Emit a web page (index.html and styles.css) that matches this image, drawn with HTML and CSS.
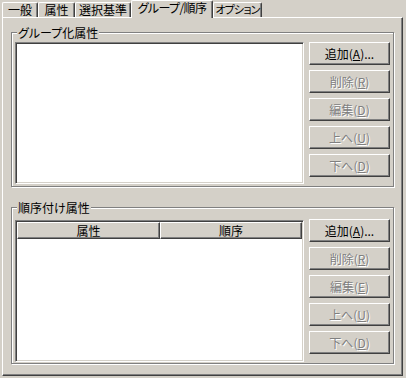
FILE: index.html
```html
<!DOCTYPE html>
<html lang="ja">
<head>
  <meta charset="UTF-8">
  <meta name="viewport" content="width=device-width, initial-scale=1.0">
  <title>グループ/順序</title>
  <link rel="stylesheet" href="styles.css">
</head>
<body>

<div class="sheet">
  <div class="tabs">
    <div class="tab tab-general">一般</div>
    <div class="tab tab-attr">属性</div>
    <div class="tab tab-select">選択基準</div>
    <div class="tab tab-group active">グループ/順序</div>
    <div class="tab tab-option">オプション</div>
  </div>

  <div class="panel">
    <!-- グループ化属性 -->
    <div class="group group-grouping">
      <div class="legend">グループ化属性</div>
      <div class="group-body">
        <div class="listbox"></div>
        <div class="buttons">
          <button class="btn">追加(<u>A</u>)...</button>
          <button class="btn" disabled>削除(<u>R</u>)</button>
          <button class="btn" disabled>編集(<u>D</u>)</button>
          <button class="btn" disabled>上へ(<u>U</u>)</button>
          <button class="btn" disabled>下へ(<u>D</u>)</button>
        </div>
      </div>
    </div>

    <!-- 順序付け属性 -->
    <div class="group group-order">
      <div class="legend">順序付け属性</div>
      <div class="group-body">
        <div class="listbox">
          <div class="list-header">
            <div class="col col-attr">属性</div>
            <div class="col col-order">順序</div>
          </div>
        </div>
        <div class="buttons">
          <button class="btn">追加(<u>A</u>)...</button>
          <button class="btn" disabled>削除(<u>R</u>)</button>
          <button class="btn" disabled>編集(<u>E</u>)</button>
          <button class="btn" disabled>上へ(<u>U</u>)</button>
          <button class="btn" disabled>下へ(<u>D</u>)</button>
        </div>
      </div>
    </div>
  </div>
</div>

</body>
</html>
```

FILE: styles.css
```css
* {
  margin: 0;
  padding: 0;
  box-sizing: border-box;
}
body {
  font-family: "Noto Sans CJK JP", sans-serif;
  font-size: 12px;
  background-color: #d4d0c8;
  color: #000;
  overflow: hidden;
}
.sheet {
  padding-left: 2px;
}

/* タブ */
.tabs {
  display: flex;
  align-items: flex-end;
  height: 17px;
}
.tab {
  display: flex;
  justify-content: center;
  height: 15px;
  line-height: 13px;
  white-space: nowrap;
  background: #d4d0c8;
  border: 1px solid #fff;
  border-bottom: none;
  border-right-color: #404040;
  border-radius: 2px 2px 0 0;
  box-shadow: inset -1px 0 #808080;
  font-feature-settings: "palt";
}
.tab-general { width: 36px; }
.tab-attr { width: 37px; }
.tab-select { width: 56px; }
.tab-group { width: 82px; letter-spacing: -0.6px; }
.tab-option { width: 49px; font-size: 11px; letter-spacing: -0.8px; }
.tab.active {
  height: 18px;
  margin-bottom: -1px;
  position: relative;
  z-index: 1;
}

/* タブの中身 */
.panel {
  width: 401px;
  height: 359px;
  padding: 14px 8px 0;
  border: 1px solid;
  border-color: #fff #404040 #404040 #fff;
  box-shadow: inset -1px -1px #808080;
}
.group {
  border: 1px solid #808080;
  box-shadow: inset 1px 1px #fff, 1px 1px #fff;
  padding: 0 3px;
}
.group-grouping {
  padding-bottom: 2px;
}
.group-order {
  margin-top: 20px;
  padding-bottom: 1px;
}
.legend {
  width: fit-content;
  margin: -7px 0 0 2px;
  padding: 0 1px;
  line-height: 13px;
  background: #d4d0c8;
  font-feature-settings: "palt";
}
.group-body {
  display: flex;
  gap: 5px;
  margin-top: 3px;
}
.group-order .group-body {
  margin-top: 5px;
}
.group-order .listbox {
  margin-top: 1px;
}

/* リスト */
.listbox {
  width: 289px;
  height: 142px;
  background: #fff;
  border: 1px solid;
  border-color: #808080 #fff #fff #808080;
  box-shadow: inset 1px 1px #404040, inset -1px -1px #d4d0c8;
  padding: 1px;
}
.list-header {
  display: flex;
}
.col {
  height: 17px;
  line-height: 15px;
  text-align: center;
  background: #d4d0c8;
  border: 1px solid;
  border-color: #fff #404040 #404040 #fff;
  box-shadow: inset -1px -1px #808080;
}
.col-attr { width: 143px; }
.col-order { width: 142px; }

/* ボタン */
.buttons {
  display: flex;
  flex-direction: column;
  gap: 5px;
  width: 81px;
}
.btn {
  width: 81px;
  height: 23px;
  font-family: inherit;
  font-size: 12px;
  line-height: 21px;
  color: #000;
  background: #d4d0c8;
  border: 1px solid;
  border-color: #fff #404040 #404040 #fff;
  box-shadow: inset -1px -1px #808080;
  font-feature-settings: "palt";
}
.btn:disabled {
  color: #808080;
  text-shadow: 1px 1px 0 #fff;
}
.btn u {
  text-underline-offset: 1px;
}
```
